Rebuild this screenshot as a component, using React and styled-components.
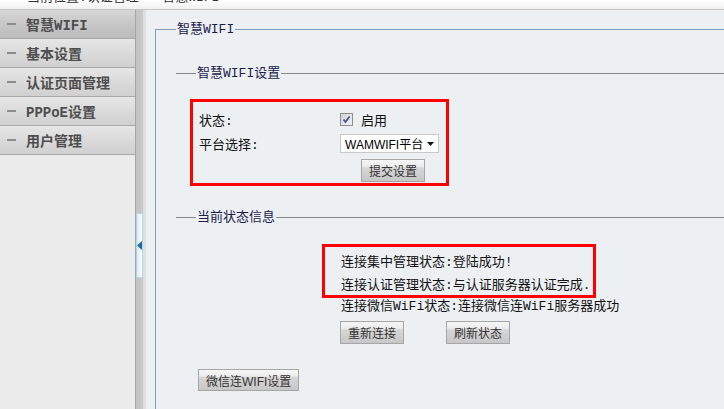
import React from "react";
import styled, { createGlobalStyle } from "styled-components";

const GlobalStyle = createGlobalStyle`
  html, body {
    margin: 0;
    padding: 0;
  }
  body {
    width: 724px;
    height: 409px;
    overflow: hidden;
    background: #edf0f3;
    font-family: "Liberation Mono", "Noto Sans CJK SC", monospace;
    font-size: 13px;
  }
`;

const menu = ["智慧WIFI", "基本设置", "认证页面管理", "PPPoE设置", "用户管理"];

const App = () => {
  return (
    <Page>
      <GlobalStyle />
      <TopBar>
        <Crumb>当前位置:认证管理 &gt; 智慧WIFI</Crumb>
      </TopBar>
      <Body>
        <Sidebar>
          {menu.map((item, i) => (
            <MenuItem key={item} active={i === 0}>
              <Dash />
              <MenuText>{item}</MenuText>
            </MenuItem>
          ))}
        </Sidebar>
        <Splitter>
          <Handle>
            <svg width="5" height="9" viewBox="0 0 5 9">
              <path d="M0 4.5 L5 0 L5 9 Z" fill="#1d6c9e" />
            </svg>
          </Handle>
        </Splitter>
        <Main>
          <Frame>
            <Legend>智慧WIFI</Legend>
            <SectionTitle top={29}>
              <span>智慧WIFI设置</span>
            </SectionTitle>
            <FormBox>
              <Label>状态:</Label>
              <CheckCell>
                <svg width="13" height="13" viewBox="0 0 13 13">
                  <defs>
                    <linearGradient id="cb" x1="0" y1="0" x2="1" y2="1">
                      <stop offset="0" stopColor="#d2d2d2" />
                      <stop offset="1" stopColor="#f4f4f4" />
                    </linearGradient>
                  </defs>
                  <rect x="0.5" y="0.5" width="12" height="12" fill="url(#cb)" stroke="#8e8e8e" />
                  <path d="M3.5 6.5 L5.5 9 L9.5 3.5" fill="none" stroke="#3b58a6" strokeWidth="1.8" />
                </svg>
                <span>启用</span>
              </CheckCell>
              <Label>平台选择:</Label>
              <Select>
                <span>WAMWIFI平台</span>
                <svg width="7" height="4" viewBox="0 0 7 4">
                  <path d="M0 0 L7 0 L3.5 4 Z" fill="#111" />
                </svg>
              </Select>
              <SubmitButton>提交设置</SubmitButton>
            </FormBox>
            <SectionTitle top={24}>
              <span>当前状态信息</span>
            </SectionTitle>
            <Status>
              <StatusBox>
                <StatusLine>连接集中管理状态:登陆成功!</StatusLine>
                <StatusLine gap={5}>连接认证管理状态:与认证服务器认证完成.</StatusLine>
              </StatusBox>
              <StatusLine indent={19}>连接微信WiFi状态:连接微信连WiFi服务器成功</StatusLine>
              <ButtonRow>
                <Button>重新连接</Button>
                <Button>刷新状态</Button>
              </ButtonRow>
            </Status>
            <WechatButton>微信连WIFI设置</WechatButton>
          </Frame>
        </Main>
      </Body>
    </Page>
  );
};

export default App;

const Page = styled.div`
  display: flex;
  flex-direction: column;
  height: 409px;
  overflow: hidden;
`;

const TopBar = styled.div`
  height: 9px;
  border-bottom: 1px solid #c6c6c6;
  background: linear-gradient(#ffffff, #f1f1f1);
  overflow: hidden;
  padding-left: 27px;
  flex-shrink: 0;
`;

const Crumb = styled.div`
  font-size: 13px;
  line-height: 13px;
  margin-top: -9px;
  color: #333;
  white-space: nowrap;
`;

const Body = styled.div`
  display: flex;
  flex: 1;
  min-height: 0;
`;

const Sidebar = styled.div`
  width: 135px;
  flex-shrink: 0;
  background: #ebebeb;
  border-right: 1px solid #a6a6a6;
`;

const MenuItem = styled.div`
  height: 28px;
  display: flex;
  align-items: center;
  gap: 10px;
  padding-left: 7px;
  border-bottom: 1px solid #a9a9a9;
  background: ${(p) =>
    p.active
      ? "linear-gradient(#d6d6d6, #c4c4c4 60%, #bcbcbc)"
      : "linear-gradient(#e6e6e6, #d8d8d8 60%, #d0d0d0)"};
`;

const Dash = styled.span`
  width: 9px;
  height: 2px;
  background: #8c8c8c;
`;

const MenuText = styled.span`
  font-weight: bold;
  font-size: 14px;
  color: #4e4e4e;
  white-space: nowrap;
`;

const Splitter = styled.div`
  width: 10px;
  flex-shrink: 0;
  display: flex;
  flex-direction: column;
  padding-top: 203px;
  box-sizing: border-box;
  background: linear-gradient(to right, #c3c3c3, #c9c9c9 65%, #dedede 70%, #e2e2e2);
`;

const Handle = styled.div`
  width: 5px;
  height: 62px;
  border: 1px solid #b4d2e8;
  background: linear-gradient(to right, #d4eaf8, #ffffff);
  display: flex;
  align-items: center;
  padding-bottom: 1px;
  box-sizing: content-box;
`;

const Main = styled.div`
  flex: 1;
  overflow: hidden;
  padding: 12px 0 0 9px;
  background: #edf0f3;
`;

const Frame = styled.fieldset`
  margin: 0;
  padding: 0 0 0 20px;
  border: 1px solid #7f9db9;
  width: calc(100% + 40px);
  height: 500px;
  box-sizing: border-box;
  min-width: 0;
`;

const Legend = styled.legend`
  padding: 0 1px;
  font-size: 13px;
  line-height: 15px;
  color: #1c1c4c;
`;

const SectionTitle = styled.div`
  display: flex;
  align-items: center;
  margin-top: ${(p) => p.top}px;
  line-height: 15px;
  color: #1c1c4c;
  &::before,
  &::after {
    content: "";
    height: 1px;
    background: #8a8a8a;
  }
  &::before {
    width: 20px;
  }
  &::after {
    flex: 1;
  }
  span {
    padding: 0 1px;
    white-space: nowrap;
  }
`;

const Highlight = styled.div`
  border: 3px solid #ff0000;
  box-sizing: border-box;
`;

const FormBox = styled(Highlight)`
  width: 259px;
  margin: 18px 0 0 14px;
  padding: 8px 0 1px 6px;
  display: grid;
  grid-template-columns: 141px auto;
  grid-template-rows: 19px 19px 24px;
  row-gap: 5px;
  align-items: center;
`;

const Label = styled.span`
  color: #111;
  white-space: nowrap;
`;

const CheckCell = styled.div`
  display: flex;
  align-items: center;
  gap: 8px;
  color: #111;
  svg {
    display: block;
  }
`;

const Select = styled.div`
  width: 99px;
  height: 19px;
  box-sizing: border-box;
  border: 1px solid #c9c9c9;
  background: #fff;
  display: flex;
  align-items: center;
  justify-content: space-between;
  padding: 0 4px 0 4px;
  font-family: "Liberation Sans", "Noto Sans CJK SC", sans-serif;
  font-size: 12px;
  color: #000;
  white-space: nowrap;
  svg {
    display: block;
  }
`;

const Button = styled.button`
  height: 23px;
  margin: 0;
  padding: 3px 7px 0;
  border: 1px solid #a6a6a6;
  border-radius: 0;
  background: linear-gradient(#f6f6f6, #ececec 30%, #d6d6d6 38%, #c7c7c7);
  font-family: "Liberation Sans", "Noto Sans CJK SC", sans-serif;
  font-size: 12px;
  line-height: 16px;
  color: #333;
  white-space: nowrap;
  justify-self: start;
`;

const SubmitButton = styled(Button)`
  grid-column: 2;
  margin: 1px 0 0 21px;
  align-self: start;
`;

const Status = styled.div`
  margin: 19px 0 0 146px;
  display: flex;
  flex-direction: column;
  align-items: flex-start;
`;

const StatusBox = styled(Highlight)`
  width: 274px;
  padding: 7px 0 0 16px;
`;

const StatusLine = styled.div`
  line-height: 18px;
  color: #111;
  white-space: nowrap;
  margin-top: ${(p) => p.gap || 0}px;
  margin-left: ${(p) => p.indent || 0}px;
`;

const ButtonRow = styled.div`
  display: flex;
  gap: 42px;
  margin: 5px 0 0 18px;
`;

const WechatButton = styled(Button)`
  display: block;
  height: 22px;
  margin: 25px 0 0 22px;
`;
